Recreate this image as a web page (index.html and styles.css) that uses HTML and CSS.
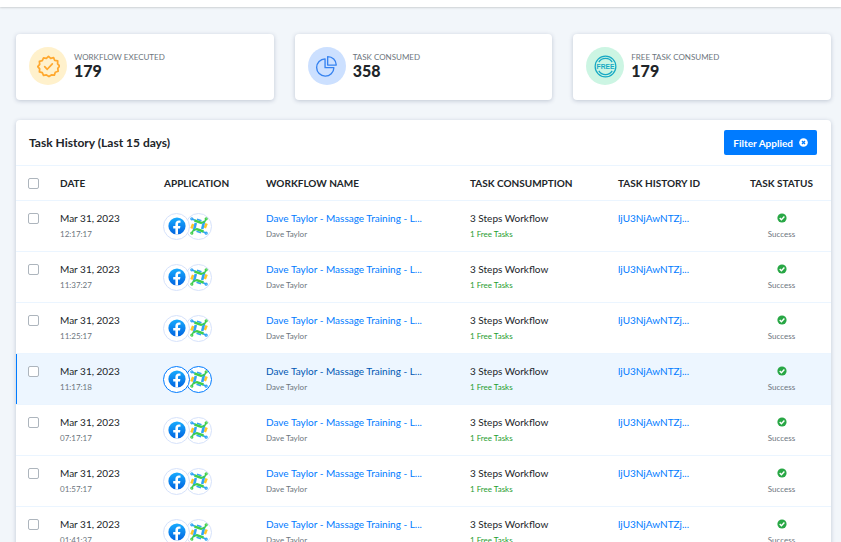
FILE: index.html
```
<!DOCTYPE html>
<html lang="en">
<head>
    <meta charset="UTF-8">
    <meta name="viewport" content="width=device-width, initial-scale=1.0">
    <title>Task History</title>
    <link rel="stylesheet" href="styles.css">
</head>
<body>
    <svg class="sprite" aria-hidden="true">
        <defs>
            <linearGradient id="fb-fill" x1="0" y1="0" x2="0" y2="1">
                <stop offset="0" stop-color="#18acfe"/>
                <stop offset="1" stop-color="#0163e0"/>
            </linearGradient>
        </defs>
        <symbol id="facebook" viewBox="0 0 18 18">
            <circle cx="9" cy="9" r="8.6" fill="url(#fb-fill)"/>
            <path fill="#fff" d="M7.400 17.500v-6H5.200V9h2.200V7.100c0-2.300 1.400-3.500 3.400-3.500.9 0 1.700.1 1.700.1v2.100h-1.100c-1 0-1.400.6-1.400 1.300V9h2.400l-.4 2.500h-2v6z"/>
        </symbol>
        <symbol id="connector" viewBox="0 0 18 18">
            <g fill="none">
                <path stroke="#ffc629" stroke-width="2.600" d="M3.200 7L1.400 11.500M16.600 6.500L14.800 11"/>
                <path stroke="#2fa4f5" stroke-width="2.600" d="M5.800 6L3.800 14M14.200 4L12.200 12"/>
                <path stroke="#2fa4f5" stroke-width="1.500" d="M1.500 1.800L5 3.200M16.500 16.200L13 14.800"/>
                <path stroke="#2fa4f5" stroke-width="1.500" d="M7 2.200L11.500 3.800M6.500 14.200L11 15.800"/>
                <path stroke="#3fce4b" stroke-width="2.400" d="M4.500 3.500L12 6.200M6 11.800L13.500 14.500"/>
                <path stroke="#3fce4b" stroke-width="1.500" d="M11.500 5.800L14.500 4.800L16 2.200M6.500 12.200L3.500 13.200L2 15.800"/>
            </g>
            <g fill="#fff" stroke-width="1.200">
                <circle cx="1.800" cy="1.800" r="1" stroke="#2fa4f5"/>
                <circle cx="16.200" cy="1.800" r="1" stroke="#3fce4b"/>
                <circle cx="1.800" cy="16.200" r="1" stroke="#3fce4b"/>
                <circle cx="16.200" cy="16.200" r="1" stroke="#2fa4f5"/>
            </g>
        </symbol>
        <symbol id="check" viewBox="0 0 10 10">
            <circle cx="5" cy="5" r="4.600" fill="#28a745"/>
            <path fill="none" stroke="#fff" stroke-width="1.400" d="M2.700 5.100l1.700 1.700 3-3.200"/>
        </symbol>
    </svg>

    <header class="topbar"></header>

    <main class="page">
        <section class="stats">
            <div class="stat">
                <span class="stat-icon yellow">
                    <svg viewBox="0 0 24 24" width="23" height="23" fill="none" stroke="#ffa82e" stroke-width="1.800" stroke-linejoin="round" stroke-linecap="round">
                        <path d="M12 1.500l2.300 2.100 3-.8 1.200 2.900 3.100.5-.1 3.100 2.200 2.200-2 2.400.4 3.100-3 1-1 3-3.100-.2L12.500 22.500l-2.600-1.700-3.100.5-1.300-2.900-3-.8.3-3.100-2-2.400 2-2.300-.3-3.100 3-.8 1.300-2.800 3 .5z"/>
                        <path d="M8 12.200l2.700 2.700L16 9.300"/>
                    </svg>
                </span>
                <div>
                    <p class="stat-label">WORKFLOW EXECUTED</p>
                    <p class="stat-value">179</p>
                </div>
            </div>
            <div class="stat">
                <span class="stat-icon blue">
                    <svg viewBox="0 0 24 24" width="23" height="23" fill="none" stroke="#3582f0" stroke-width="1.400" stroke-linejoin="round">
                        <path d="M10.500 4a9 9 0 1 0 9.200 9.200h-9.200z"/>
                        <path d="M13.200 1.700v8.800h9A8.900 8.900 0 0 0 13.200 1.700z"/>
                    </svg>
                </span>
                <div>
                    <p class="stat-label">TASK CONSUMED</p>
                    <p class="stat-value">358</p>
                </div>
            </div>
            <div class="stat">
                <span class="stat-icon green">
                    <svg viewBox="0 0 24 24" width="23" height="23" fill="none" stroke="#16a9c4" stroke-width="1.300">
                        <circle cx="12" cy="12" r="10.800"/>
                        <path d="M5 7.500a8.200 8.200 0 0 1 14 0M5 16.500a8.200 8.200 0 0 0 14 0"/>
                        <text class="free-text" x="12" y="15" text-anchor="middle">FREE</text>
                    </svg>
                </span>
                <div>
                    <p class="stat-label">FREE TASK CONSUMED</p>
                    <p class="stat-value">179</p>
                </div>
            </div>
        </section>

        <section class="history">
            <div class="history-head">
                <h1>Task History (Last 15 days)</h1>
                <button type="button" class="filter-btn">Filter Applied
                    <svg viewBox="0 0 10 10" width="9" height="9">
                        <circle cx="5" cy="5" r="4.800" fill="#fff"/>
                        <path stroke="#007bff" stroke-width="1.400" d="M3.300 3.300l3.400 3.400M6.700 3.300L3.300 6.700"/>
                    </svg>
                </button>
            </div>
            <table>
                <thead>
                    <tr>
                        <th class="col-check"><input type="checkbox" aria-label="Select all tasks"></th>
                        <th class="col-date">DATE</th>
                        <th class="col-app">APPLICATION</th>
                        <th class="col-name">WORKFLOW NAME</th>
                        <th class="col-usage">TASK CONSUMPTION</th>
                        <th class="col-id">TASK HISTORY ID</th>
                        <th class="col-status">TASK STATUS</th>
                    </tr>
                </thead>
                <tbody id="rows"></tbody>
            </table>
        </section>
    </main>

    <script>
        const rows=document.querySelector('#rows');
        const times=['12:17:17','11:37:27','11:25:17','11:17:18','07:17:17','01:57:17','01:41:37'];
        const activeTime='11:17:18';

        times.forEach(function(time){
            let row=document.createElement('tr');
            if(time===activeTime){
                row.classList.add('active');
            }
            row.innerHTML=`
                <td class="col-check"><input type="checkbox" aria-label="Select task ${time}"></td>
                <td>Mar 31, 2023<small>${time}</small></td>
                <td class="apps"><div class="app-icons">
                    <span class="app"><svg width="18" height="18"><use href="#facebook"/></svg></span>
                    <span class="app"><svg width="18" height="18"><use href="#connector"/></svg></span>
                </div></td>
                <td><a class="name" href="#">Dave Taylor - Massage Training - L...</a><small>Dave Taylor</small></td>
                <td>3 Steps Workflow<small class="free">1 Free Tasks</small></td>
                <td><a href="#">ljU3NjAwNTZj...</a></td>
                <td class="col-status"><svg class="ok" width="10" height="10"><use href="#check"/></svg><small>Success</small></td>`;
            rows.appendChild(row);
        });
    </script>
</body>
</html>
```
FILE: styles.css
```
*{
    box-sizing: border-box;
    margin: 0;
    padding: 0;
}
body{
    height: 100vh;
    overflow: hidden;
    background-color: #f2f6fa;
    color: #212529;
    font-family: Lato, sans-serif;
    font-size: 10px;
    line-height: 16px;
}
.sprite{
    position: absolute;
    width: 0;
    height: 0;
}
.topbar{
    height: 7px;
    background-color: white;
    box-shadow: 0 1px 2px rgba(0, 0, 0, 0.15);
}
.page{
    padding: 27px 10px 0 16px;
}
.stats{
    display: grid;
    grid-template-columns: repeat(3, 1fr);
    gap: 21px;
    margin-bottom: 20px;
}
.stat, .history{
    background-color: white;
    border-radius: 4px;
    box-shadow: 0 1px 4px rgba(40, 60, 100, 0.25);
}
.stat{
    display: flex;
    align-items: center;
    gap: 7px;
    height: 66px;
    padding: 0 13px 2px;
}
.stat-icon{
    display: flex;
    align-items: center;
    justify-content: center;
    width: 38px;
    height: 38px;
    border-radius: 50%;
}
.yellow{
    background-color: #fff1cc;
}
.blue{
    background-color: #cce0ff;
}
.green{
    background-color: #ccf5e3;
}
.free-text{
    fill: #16a9c4;
    stroke: none;
    font: bold 7px "Liberation Sans Narrow", "Liberation Sans", sans-serif;
}
.stat-label{
    color: #6c757d;
    font-size: 8px;
    line-height: 10px;
}
.stat-value{
    font-size: 16px;
    font-weight: 900;
    line-height: 18px;
}
.history-head{
    display: flex;
    align-items: center;
    justify-content: space-between;
    height: 45px;
    padding: 0 14px 0 13px;
}
h1{
    font-size: 12px;
    font-weight: bold;
}
.filter-btn{
    display: flex;
    align-items: center;
    gap: 6px;
    height: 25px;
    padding: 0 9px;
    border: 0;
    border-radius: 2px;
    background-color: #007bff;
    color: white;
    font: bold 10px Lato, sans-serif;
    cursor: pointer;
}
table{
    width: 100%;
    table-layout: fixed;
    border-collapse: separate;
    border-spacing: 0;
}
th{
    height: 35px;
    padding: 0 0 0 12px;
    border-top: 1px solid #ebf5ff;
    font-weight: bold;
    text-align: left;
    white-space: nowrap;
}
td{
    height: 51px;
    padding: 9px 0 9px 12px;
    border-top: 1px solid #ebf5ff;
    vertical-align: top;
    white-space: nowrap;
}
.col-check{
    width: 32px;
}
.col-date{
    width: 104px;
}
.col-app{
    width: 102px;
}
.col-name{
    width: 204px;
}
.col-usage{
    width: 148px;
}
.col-id{
    width: 126px;
}
.col-status{
    width: 99px;
    padding-left: 0;
    text-align: center;
}
input{
    appearance: none;
    display: block;
    width: 11px;
    height: 11px;
    border: 1px solid #adb5bd;
    border-radius: 2px;
    background-color: white;
}
input:checked{
    background-color: #007bff;
}
td input{
    margin-top: 3px;
}
small{
    display: block;
    color: #6c757d;
    font-size: 8px;
}
a{
    color: #007bff;
    text-decoration: none;
}
.free{
    color: #1f9d2f;
}
.apps{
    vertical-align: middle;
    padding: 0 0 0 11px;
}
.app-icons{
    display: flex;
}
.app{
    display: flex;
    align-items: center;
    justify-content: center;
    width: 27px;
    height: 27px;
    border: 1px solid #d6e2fb;
    border-radius: 50%;
    background-color: white;
}
.app:first-child{
    z-index: 1;
}
.app + .app{
    margin-left: -5px;
}
.ok{
    display: block;
    height: 16px;
    margin: 0 auto;
}
.active td{
    background-color: #edf6ff;
}
.active .col-check{
    box-shadow: inset 1px 0 #007bff;
}
.active .app{
    border-color: #007bff;
}
.active .name{
    color: #0056b3;
}
```
